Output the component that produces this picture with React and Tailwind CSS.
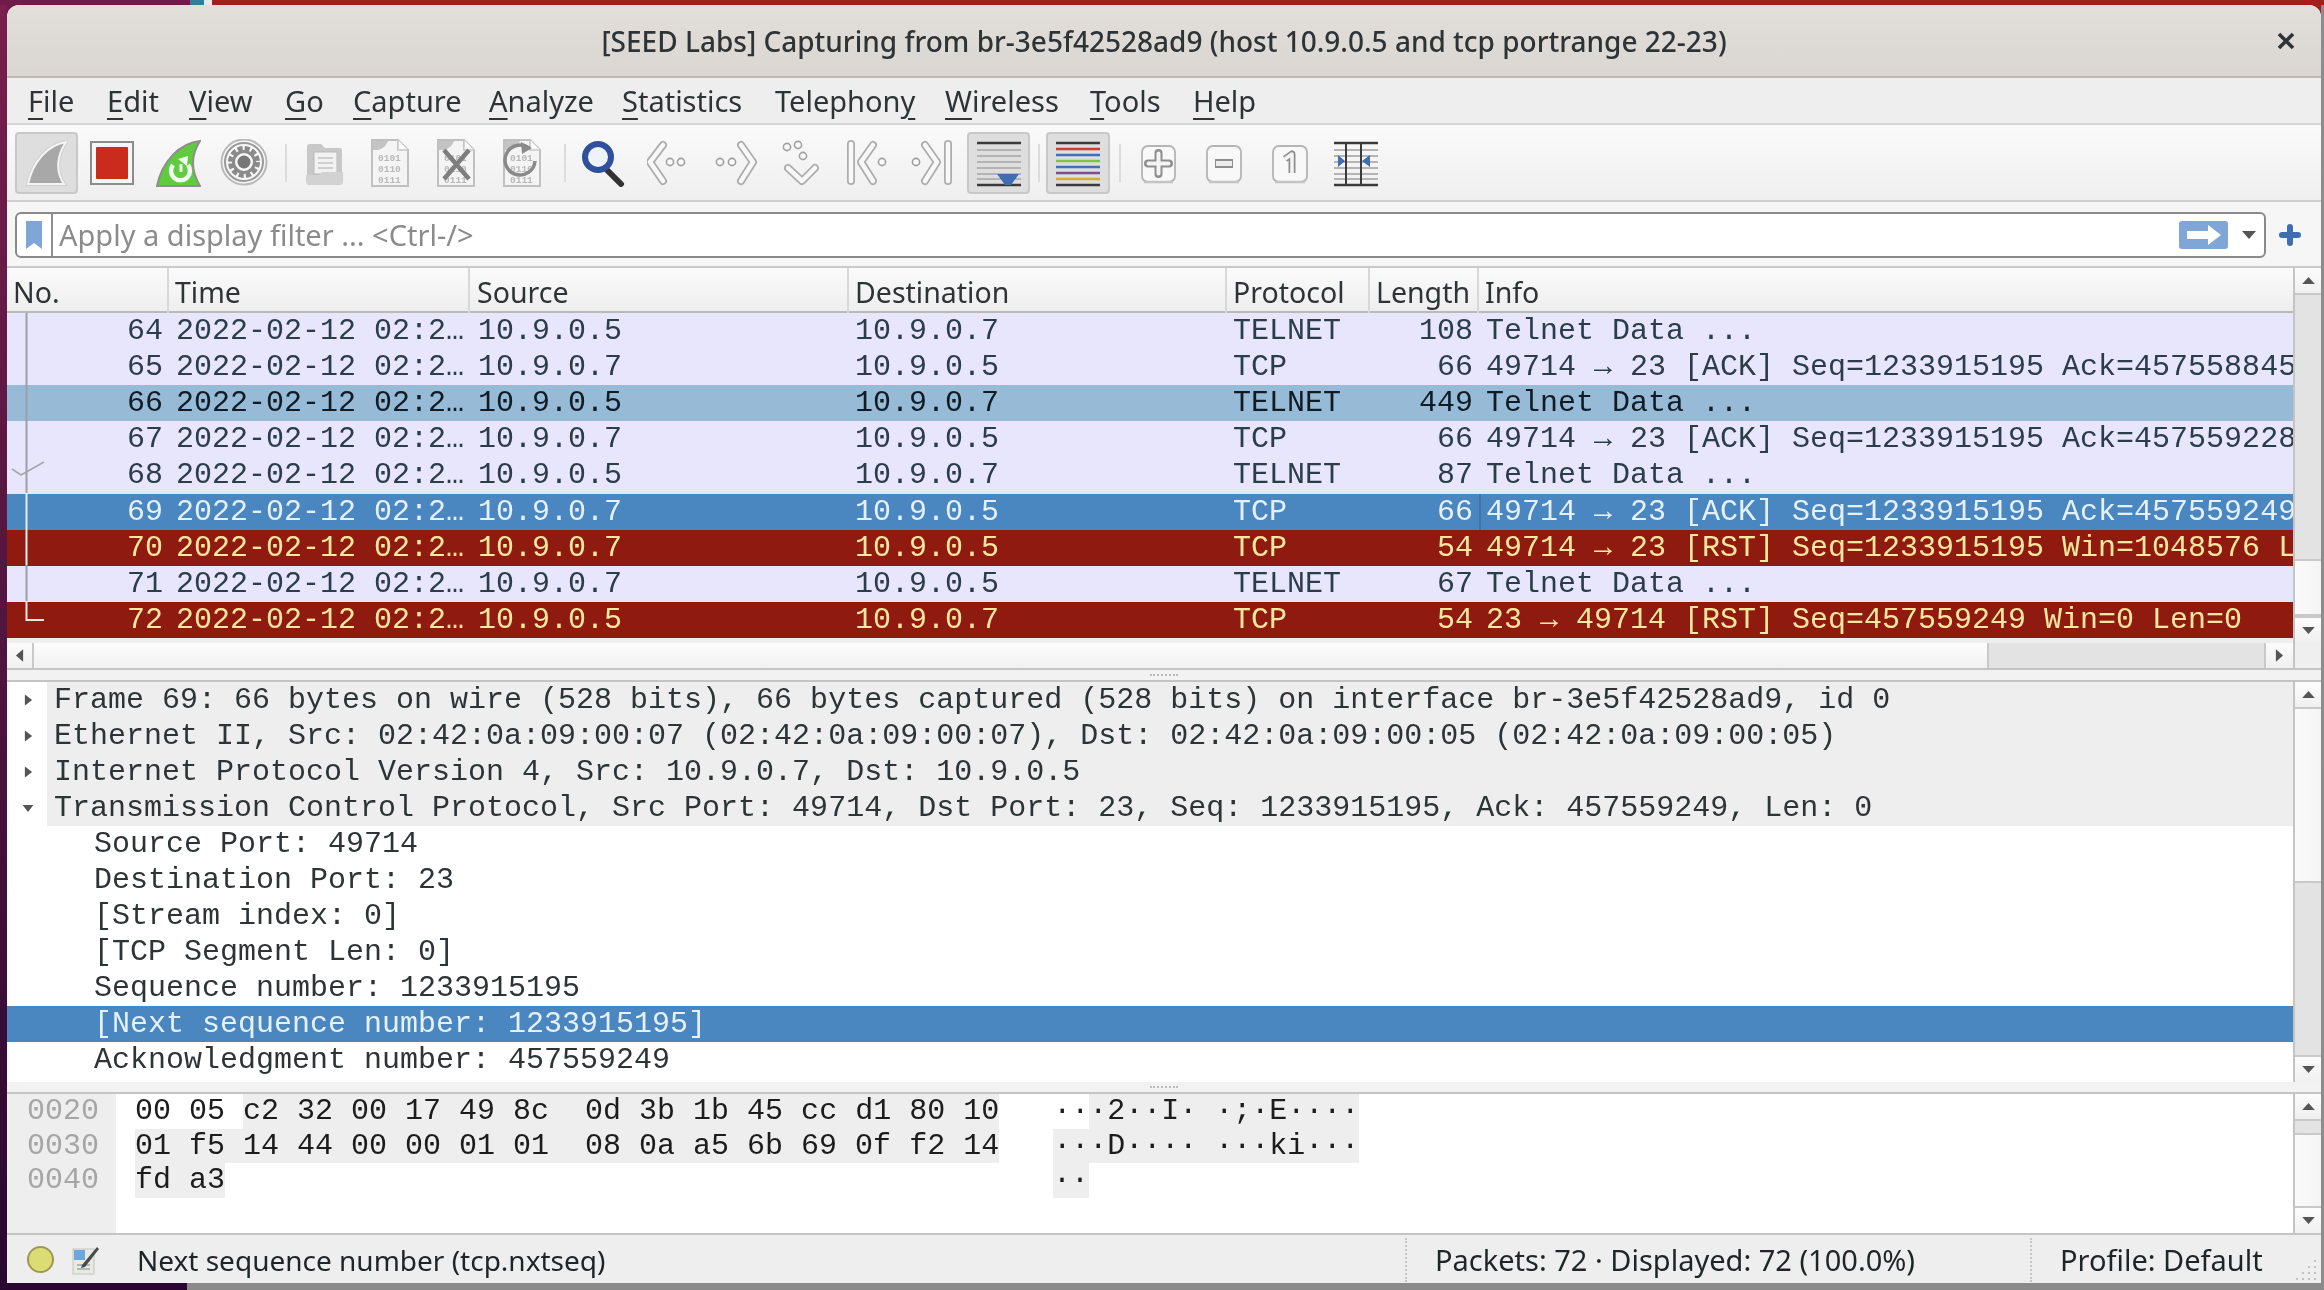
import React from "react";

const sans = "font-['Noto_Sans',sans-serif]";
const mono = "font-['Liberation_Mono',monospace]";

const menus = [
  ["", "F", "ile", "w-[79px]"],
  ["", "E", "dit", "w-[82px]"],
  ["", "V", "iew", "w-[96px]"],
  ["", "G", "o", "w-[68px]"],
  ["", "C", "apture", "w-[136px]"],
  ["", "A", "nalyze", "w-[133px]"],
  ["", "S", "tatistics", "w-[153px]"],
  ["Telephon", "y", "", "w-[170px]"],
  ["", "W", "ireless", "w-[145px]"],
  ["", "T", "ools", "w-[103px]"],
  ["", "H", "elp", "w-[80px]"],
];

const A = "10.9.0.5";
const B = "10.9.0.7";
const rows = [
  [64, A, B, "TELNET", 108, "Telnet Data ...", "n"],
  [65, B, A, "TCP", 66, "49714 → 23 [ACK] Seq=1233915195 Ack=457558845", "n"],
  [66, A, B, "TELNET", 449, "Telnet Data ...", "m"],
  [67, B, A, "TCP", 66, "49714 → 23 [ACK] Seq=1233915195 Ack=457559228", "n"],
  [68, A, B, "TELNET", 87, "Telnet Data ...", "n"],
  [69, B, A, "TCP", 66, "49714 → 23 [ACK] Seq=1233915195 Ack=457559249", "s"],
  [70, B, A, "TCP", 54, "49714 → 23 [RST] Seq=1233915195 Win=1048576 Len=0", "r"],
  [71, B, A, "TELNET", 67, "Telnet Data ...", "n"],
  [72, A, B, "TCP", 54, "23 → 49714 [RST] Seq=457559249 Win=0 Len=0", "r"],
];
const rowStyle = {
  n: "bg-[#e7e6fc] text-[#2c3d4a]",
  m: "bg-[#97bad7] text-[#0f1c26]",
  s: "bg-[#4a87c0] text-[#e6f0f8]",
  r: "bg-[#8f1b10] text-[#fbe8a0]",
};
const cols = "grid grid-cols-[162px_301px_379px_378px_143px_109px_1fr]";

const Up = () => (
  <svg viewBox="0 0 16 10" className="w-[15px] h-[9px]"><path d="M8 1 L15 9 H1Z" fill="#555" /></svg>
);
const Down = () => (
  <svg viewBox="0 0 16 10" className="w-[15px] h-[9px]"><path d="M8 9 L15 1 H1Z" fill="#555" /></svg>
);
const Left = () => (
  <svg viewBox="0 0 10 16" className="w-[9px] h-[15px]"><path d="M1 8 L9 1 V15Z" fill="#555" /></svg>
);
const Right = () => (
  <svg viewBox="0 0 10 16" className="w-[9px] h-[15px]"><path d="M9 8 L1 1 V15Z" fill="#555" /></svg>
);

const Btn = ({ className = "", children }) => (
  <div className={`flex items-center justify-center bg-gradient-to-b from-[#fcfcfc] to-[#f0f0f0] border-[#c9c9c9] ${className}`}>
    {children}
  </div>
);

const Ico = ({ w, className = "", children }) => (
  <svg viewBox={`0 0 ${w} 48`} width={w} height={48} className={`shrink-0 ${className}`} fill="none">
    {children}
  </svg>
);

const Sep = ({ className }) => <div className={`w-[2px] h-[38px] bg-[#dcdcdc] shrink-0 ${className}`} />;

const Toggle = ({ className = "", children }) => (
  <div className={`h-[62px] shrink-0 flex items-center justify-center rounded-[4px] border-2 border-[#c8c8c8] bg-[#dedede] ${className}`}>
    {children}
  </div>
);

const Doc = ({ children }) => (
  <Ico w={40} className="ml-[26px]">
    <path d="M2 1 H28 L38 11 V47 H2Z" fill="#f4f4f4" stroke="#c0c0c0" strokeWidth="2" />
    <path d="M3 2 H18 C16 7 14 9 8 11 H3Z M22 2 H27 V11 H36 L28 2Z" fill="#c4c4c4" />
    <path d="M28 1 V11 H38" fill="#fafafa" stroke="#c8c8c8" strokeWidth="1.5" />
    <g fontFamily="'Liberation Mono',monospace" fontSize="9.5" fill="#b8b8b8" fontWeight="700">
      <text x="8" y="22">0101</text>
      <text x="8" y="33">0110</text>
      <text x="8" y="44">0111</text>
    </g>
    {children}
  </Ico>
);

const Chevron = ({ d }) => (
  <>
    <path d={d} stroke="#adadad" strokeWidth="8" strokeLinecap="round" strokeLinejoin="round" />
    <path d={d} stroke="#f8f8f8" strokeWidth="4.5" strokeLinecap="round" strokeLinejoin="round" />
  </>
);
const Dot = ({ x, y }) => <circle cx={x} cy={y} r="3.6" fill="#fafafa" stroke="#a0a0a0" strokeWidth="1.6" />;

const ZoomBox = ({ w = 36, className = "ml-[30px]", children }) => (
  <Ico w={w} className={className}>
    <rect x="1" y="7" width={w - 2} height="36" rx="6" fill="#f8f8f8" stroke="#b4b4b4" strokeWidth="1.8" />
    <path d={`M3 43 H${w - 3}`} stroke="#c4c4c4" strokeWidth="2.5" />
    {children}
  </Ico>
);

function Toolbar() {
  return (
    <div className="h-[77px] shrink-0 flex items-center pl-[8px] bg-gradient-to-b from-[#fafafa] to-[#efefef] border-b-2 border-[#cfcfcf]">
      <Toggle className="w-[63px]">
        <Ico w={42}>
          <path d="M40 3 C22 6 7 22 2 45 H38 C29 32 31 16 40 3Z" fill="#a8a8a8" stroke="#cfcfcf" strokeWidth="4" />
          <path d="M40 3 C22 6 7 22 2 45 H38 C29 32 31 16 40 3Z" fill="#a8a8a8" stroke="#f4f4f4" strokeWidth="2" />
        </Ico>
      </Toggle>
      <Ico w={44} className="ml-[12px]">
        <rect x="1" y="3" width="42" height="42" fill="#f6f6f6" stroke="#8c8c8c" strokeWidth="2" />
        <rect x="6" y="8" width="32" height="32" rx="1" fill="#c92b1c" />
      </Ico>
      <Ico w={45} className="ml-[22px]">
        <path d="M44 2 C24 4 6 22 1 47 H44 C35 32 35 16 44 2Z" fill="#5fcb3f" stroke="#8e8e8e" strokeWidth="2" />
        <path d="M17 26 A9.5 9.5 0 1 0 32 26" stroke="#f2fbef" strokeWidth="4.5" />
        <path d="M22 20 L32 17 L31 27Z" fill="#f2fbef" />
        <path d="M25 25 V33" stroke="#f2fbef" strokeWidth="3" />
      </Ico>
      <Ico w={48} className="ml-[19px]">
        <circle cx="24" cy="23" r="22.5" fill="#f7f7f7" stroke="#b9b9b9" strokeWidth="2" />
        <circle cx="24" cy="23" r="19" stroke="#9a9a9a" strokeWidth="2" />
        <circle cx="24" cy="23" r="13.5" stroke="#8b8b8b" strokeWidth="5" strokeDasharray="5 2.1" />
        <circle cx="24" cy="23" r="10.5" stroke="#8b8b8b" strokeWidth="3" />
        <circle cx="24" cy="23" r="6.5" fill="#777" />
      </Ico>
      <Sep className="ml-[17px]" />
      <Ico w={39} className="ml-[18px]">
        <path d="M2 8 Q2 5 5 5 H16 L20 9 H35 Q37 9 37 12 V40 H2Z" fill="#c8c8c8" />
        <rect x="9" y="13" width="23" height="22" fill="#f2f2f2" stroke="#b9b9b9" />
        <path d="M13 19 H28 M13 24 H28 M13 29 H28" stroke="#c4c4c4" strokeWidth="1.6" />
        <path d="M1 36 H14 L17 33 H38 V42 Q38 46 35 46 H4 Q1 46 1 42Z" fill="#d2d2d2" />
      </Ico>
      <Doc />
      <Doc>
        <path d="M8 11 L33 40 M33 11 L8 40" stroke="#7e7e7e" strokeWidth="4.5" />
      </Doc>
      <Doc>
        <path d="M27 9 A15 15 0 1 0 33 22" stroke="#8a8a8a" strokeWidth="3.5" />
        <path d="M19 3 L30 9 L20 15Z" fill="#8a8a8a" />
      </Doc>
      <Sep className="ml-[22px]" />
      <Ico w={45} className="ml-[14px]">
        <path d="M27 31 L41 45" stroke="#333" strokeWidth="6" strokeLinecap="round" />
        <circle cx="18" cy="18" r="13" fill="#eef2fa" stroke="#2f4f9f" strokeWidth="6" />
      </Ico>
      <Ico w={41} className="ml-[22px]">
        <Chevron d="M16 6 L3 23 L16 42" />
        <Dot x={23} y={23} />
        <Dot x={34} y={23} />
      </Ico>
      <Ico w={43} className="ml-[26px]">
        <Dot x={6} y={23} />
        <Dot x={18} y={23} />
        <Chevron d="M27 6 L39 23 L27 42" />
      </Ico>
      <Ico w={38} className="ml-[25px]">
        <Dot x={5} y={8} />
        <Dot x={16} y={6} />
        <Dot x={21} y={17} />
        <Chevron d="M6 29 L20 42 L33 29" />
      </Ico>
      <Ico w={41} className="ml-[27px]">
        <Chevron d="M4 5 V42" />
        <Chevron d="M26 6 L14 23 L26 42" />
        <Dot x={35} y={23} />
      </Ico>
      <Ico w={42} className="ml-[22px]">
        <Dot x={6} y={23} />
        <Chevron d="M15 6 L27 23 L15 42" />
        <Chevron d="M38 5 V42" />
      </Ico>
      <Toggle className="w-[63px] ml-[15px]">
        <Ico w={46}>
          <path d="M1 4 H45 M1 46 H45" stroke="#3b3b3b" strokeWidth="2.4" />
          <path d="M1 11 H45 M1 17 H45 M1 23 H45 M1 29 H45 M1 35 H45 M1 40 H45" stroke="#b4b4b4" strokeWidth="2" />
          <path d="M21 35 H43 L35 46 H29Z" fill="#3f6eb0" />
        </Ico>
      </Toggle>
      <Sep className="ml-[8px]" />
      <Toggle className="ml-[6px] w-[64px]">
        <Ico w={46}>
          <path d="M1 4 H45 M1 46 H45" stroke="#3b3b3b" strokeWidth="2.4" />
          <path d="M1 10 H45" stroke="#cc3a33" strokeWidth="2.6" />
          <path d="M1 16 H45" stroke="#3f70b8" strokeWidth="2.6" />
          <path d="M1 22 H45" stroke="#7fc241" strokeWidth="2.6" />
          <path d="M1 28 H45" stroke="#3f70b8" strokeWidth="2.6" />
          <path d="M1 34 H45" stroke="#7a4f94" strokeWidth="2.6" />
          <path d="M1 40 H45" stroke="#d3ac33" strokeWidth="2.6" />
        </Ico>
      </Toggle>
      <Sep className="ml-[9px]" />
      <ZoomBox w={35} className="ml-[20px]">
        <path d="M17.5 14 V35 M7 24.5 H28" stroke="#8e8e8e" strokeWidth="8" strokeLinecap="round" />
        <path d="M17.5 14.5 V34.5 M7.5 24.5 H27.5" stroke="#f4f4f4" strokeWidth="4" strokeLinecap="round" />
      </ZoomBox>
      <ZoomBox>
        <path d="M9 24.5 H27" stroke="#8e8e8e" strokeWidth="9" />
        <path d="M10 24.5 H26" stroke="#ececec" strokeWidth="5" />
      </ZoomBox>
      <ZoomBox>
        <path d="M13 20 L20 15 V34" stroke="#8e8e8e" strokeWidth="7" strokeLinejoin="round" />
        <path d="M13 20 L20 15 V34" stroke="#f4f4f4" strokeWidth="3.5" strokeLinejoin="round" />
      </ZoomBox>
      <Ico w={44} className="ml-[26px]">
        <path d="M0 4 H44 M0 46 H44" stroke="#3b3b3b" strokeWidth="2.4" />
        <path d="M0 11 H44 M0 17 H44 M0 23 H44 M0 29 H44 M0 35 H44 M0 40 H44" stroke="#b4b4b4" strokeWidth="2" />
        <path d="M12 3 V47 M27 3 V47" stroke="#3b3b3b" strokeWidth="2" />
        <path d="M4 16 L11 22 L4 28Z M36 16 L28 22 L36 28Z" fill="#3f6eb0" />
      </Ico>
    </div>
  );
}

const Scrollbar = ({ top, mid, bottomTrack, h }) => (
  <div className={`w-[28px] shrink-0 flex flex-col border-l-2 border-[#c4c4c4] ${h}`}>
    <Btn className="h-[27px] shrink-0 border-b-2"><Up /></Btn>
    {top && <div className={`${top} shrink-0 bg-[#e3e3e3] border-b-2 border-[#c9c9c9]`} />}
    {mid && <div className={`${mid} shrink-0 bg-gradient-to-r from-[#fbfbfb] to-[#f4f4f4] border-b-2 border-[#c9c9c9]`} />}
    {bottomTrack && <div className="flex-1 bg-[#e3e3e3]" />}
    <Btn className="h-[27px] shrink-0 border-t-2"><Down /></Btn>
  </div>
);

const Head = ({ className, children }) => (
  <div className={`flex items-center h-full pt-[3px] border-r-2 border-[#d8d8d8] ${className}`}>{children}</div>
);

function PacketPane() {
  return (
    <div className="flex h-[375px] shrink-0">
      <div className="flex-1 min-w-0 flex flex-col">
        <div className={`${cols} h-[45px] shrink-0 bg-gradient-to-b from-[#fbfbfb] to-[#eeeeee] border-b-2 border-[#b9b9b9] text-[28.5px] text-[#2e3436] ${sans}`}>
          <Head className="pl-[6px]">No.</Head>
          <Head className="pl-[6px]">Time</Head>
          <Head className="pl-[7px]">Source</Head>
          <Head className="pl-[6px]">Destination</Head>
          <Head className="pl-[6px]">Protocol</Head>
          <Head className="pl-[6px]">Length</Head>
          <div className="flex items-center pt-[3px] pl-[6px]">Info</div>
        </div>
        <div className={`relative h-[325px] shrink-0 grid grid-rows-9 text-[30px] leading-none whitespace-pre ${mono}`}>
          {rows.map(([no, src, dst, proto, len, info, k]) => (
            <div key={no} className={`${cols} items-center ${rowStyle[k]}`}>
              <div className="text-right pr-[6px]">{no}</div>
              <div className="pl-[7px]">2022-02-12 02:2…</div>
              <div className="pl-[8px]">{src}</div>
              <div className="pl-[6px]">{dst}</div>
              <div className="pl-[6px]">{proto}</div>
              <div className="text-right pr-[6px]">{len}</div>
              <div className={`overflow-hidden h-full flex items-center ${k === "s" ? "pl-[5px] border-l-2 border-[#3f75aa]" : "pl-[7px]"}`}>{info}</div>
            </div>
          ))}
          <svg className="absolute left-0 top-0 w-[50px] h-[325px]" viewBox="0 0 50 325" fill="none">
            <path d="M19.5 0 V180" stroke="#9aa0a8" strokeWidth="2" />
            <path d="M19.5 180 V252" stroke="#e8ecf0" strokeWidth="2" />
            <path d="M19.5 252 V288" stroke="#9aa0a8" strokeWidth="2" />
            <path d="M19.5 288 V307 H37" stroke="#f0e6d8" strokeWidth="2" />
            <path d="M5 156 L14 162 L37 149" stroke="#a4a8ae" strokeWidth="1.6" />
          </svg>
        </div>
        <div className="h-[5px] shrink-0 bg-[#eeeeee]" />
      </div>
      <Scrollbar h="h-[375px]" top="h-[266px]" mid="flex-1" />
    </div>
  );
}

function HScroll() {
  return (
    <div className="flex h-[27px] shrink-0 bg-[#e3e3e3] border-b-2 border-[#c4c4c4]">
      <Btn className="w-[27px] border-r-2"><Left /></Btn>
      <div className="w-[1955px] bg-gradient-to-b from-[#fdfdfd] to-[#f1f1f1] border-r-2 border-[#c9c9c9]" />
      <div className="flex-1" />
      <Btn className="w-[29px] border-l-2"><Right /></Btn>
      <div className="w-[28px] bg-[#efefef] border-l-2 border-[#c4c4c4]" />
    </div>
  );
}

const Splitter = () => (
  <div className="h-[12px] shrink-0 bg-[#f2f2f2] border-b-2 border-[#c4c4c4] flex items-center justify-center">
    <div className="w-[28px] border-t-2 border-dotted border-[#bbbbbb]" />
  </div>
);

const details = [
  ["c", "Frame 69: 66 bytes on wire (528 bits), 66 bytes captured (528 bits) on interface br-3e5f42528ad9, id 0"],
  ["c", "Ethernet II, Src: 02:42:0a:09:00:07 (02:42:0a:09:00:07), Dst: 02:42:0a:09:00:05 (02:42:0a:09:00:05)"],
  ["c", "Internet Protocol Version 4, Src: 10.9.0.7, Dst: 10.9.0.5"],
  ["e", "Transmission Control Protocol, Src Port: 49714, Dst Port: 23, Seq: 1233915195, Ack: 457559249, Len: 0"],
  ["f", "Source Port: 49714"],
  ["f", "Destination Port: 23"],
  ["f", "[Stream index: 0]"],
  ["f", "[TCP Segment Len: 0]"],
  ["f", "Sequence number: 1233915195"],
  ["s", "[Next sequence number: 1233915195]"],
  ["f", "Acknowledgment number: 457559249"],
];

function DetailPane() {
  return (
    <div className="flex h-[400px] shrink-0 bg-white">
      <div className={`flex-1 min-w-0 overflow-hidden text-[30px] leading-none whitespace-pre text-[#2e3436] ${mono}`}>
        {details.map(([k, t]) =>
          k === "c" || k === "e" ? (
            <div key={t} className="h-[36px] flex items-center">
              <div className="w-[40px] flex justify-center shrink-0 pl-[2px]">
                {k === "c" ? (
                  <svg viewBox="0 0 10 14" className="w-[9px] h-[14px]"><path d="M1 1 L9 7 L1 13Z" fill="#555" /></svg>
                ) : (
                  <svg viewBox="0 0 14 10" className="w-[14px] h-[9px]"><path d="M1 1 H13 L7 9Z" fill="#555" /></svg>
                )}
              </div>
              <div className="flex-1 h-full bg-[#eeeeee] flex items-center pl-[7px]">{t}</div>
            </div>
          ) : (
            <div key={t} className={`h-[36px] flex items-center pl-[87px] ${k === "s" ? "bg-[#4a87c0] text-[#e6f0f8]" : ""}`}>{t}</div>
          )
        )}
      </div>
      <Scrollbar h="h-[400px]" mid="h-[174px]" bottomTrack />
    </div>
  );
}

function HexPane() {
  const g = "bg-[#eeeeee]";
  return (
    <div className="flex h-[141px] shrink-0 bg-white border-b-2 border-[#c4c4c4]">
      <div className={`flex-1 min-w-0 flex text-[30px] leading-none whitespace-pre text-[#1c1c1c] ${mono}`}>
        <div className="w-[109px] shrink-0 bg-[#eeeeee] pl-[20px] text-[#a6a6a6]">
          <div className="h-[34.5px] flex items-center">0020</div>
          <div className="h-[34.5px] flex items-center">0030</div>
          <div className="h-[34.5px] flex items-center">0040</div>
        </div>
        <div className="pl-[19px]">
          <div className="h-[34.5px] flex">
            <span className="flex items-center">{"00 05 "}</span>
            <span className={`flex items-center ${g}`}>{"c2 32 00 17 49 8c  0d 3b 1b 45 cc d1 80 10"}</span>
            <div className="w-[54px]" />
            <span className="flex items-center">{"··"}</span>
            <span className={`flex items-center ${g}`}>{"·2··I· ·;·E····"}</span>
          </div>
          <div className="h-[34.5px] flex">
            <span className={`flex items-center ${g}`}>{"01 f5 14 44 00 00 01 01  08 0a a5 6b 69 0f f2 14"}</span>
            <div className="w-[54px]" />
            <span className={`flex items-center ${g}`}>{"···D···· ···ki···"}</span>
          </div>
          <div className="h-[34.5px] flex">
            <span className={`flex items-center ${g}`}>{"fd a3"}</span>
            <div className="w-[828px]" />
            <span className={`flex items-center ${g}`}>{"··"}</span>
          </div>
        </div>
      </div>
      <div className="w-[28px] shrink-0 flex flex-col border-l-2 border-[#c4c4c4]">
        <Btn className="h-[27px] shrink-0 border-b-2"><Up /></Btn>
        <div className="h-[14px] shrink-0 bg-[#e3e3e3] border-b-2 border-[#c9c9c9]" />
        <div className="flex-1 bg-gradient-to-r from-[#fbfbfb] to-[#f4f4f4]" />
        <Btn className="h-[27px] shrink-0 border-t-2"><Down /></Btn>
      </div>
    </div>
  );
}

function StatusBar() {
  return (
    <div className={`h-[49px] shrink-0 flex items-center bg-[#eeeeee] text-[29px] text-[#1f2426] ${sans}`}>
      <div className="ml-[20px] w-[27px] h-[27px] rounded-full bg-[#dcdc74] border-2 border-[#9a9a50] shrink-0" />
      <svg viewBox="0 0 28 30" className="ml-[18px] w-[28px] h-[30px] shrink-0" fill="none">
        <rect x="1" y="4" width="21" height="25" fill="#e9e9e0" stroke="#c4c4c4" />
        <rect x="2" y="5" width="11" height="10" fill="#6aa7e0" />
        <path d="M5 20 H18 M5 24 H18" stroke="#9aa" strokeWidth="1.5" />
        <path d="M10 20 L25 2 L27 4 L13 22 L9 23Z" fill="#4a4a4a" />
      </svg>
      <div className="ml-[37px] w-[1268px] shrink-0 text-[28px]">Next sequence number (tcp.nxtseq)</div>
      <div className="h-[44px] border-l-2 border-dotted border-[#c6c6c6]" />
      <div className="ml-[28px] w-[595px] shrink-0">Packets: 72 · Displayed: 72 (100.0%)</div>
      <div className="h-[44px] border-l-2 border-dotted border-[#c6c6c6]" />
      <div className="ml-[28px] flex-1">Profile: Default</div>
      <svg viewBox="0 0 24 24" className="w-[24px] h-[24px] self-end mb-[2px] mr-[3px]">
        <g fill="#c2c2c2">
          <rect x="20" y="2" width="2" height="2" />
          <rect x="14" y="8" width="2" height="2" />
          <rect x="20" y="8" width="2" height="2" />
          <rect x="8" y="14" width="2" height="2" />
          <rect x="14" y="14" width="2" height="2" />
          <rect x="20" y="14" width="2" height="2" />
          <rect x="2" y="20" width="2" height="2" />
          <rect x="8" y="20" width="2" height="2" />
          <rect x="14" y="20" width="2" height="2" />
          <rect x="20" y="20" width="2" height="2" />
        </g>
      </svg>
    </div>
  );
}

export default function App() {
  return (
    <div className="w-[2324px] h-[1290px] flex flex-col overflow-hidden bg-[linear-gradient(90deg,#6f1c4c_50%,#a1201a_50%)] [filter:blur(0.5px)]">
      <div className="h-[5px] shrink-0 flex">
        <div className="w-[190px] bg-[#6f1c4c]" />
        <div className="w-[14px] bg-[#2f7f9a]" />
        <div className="w-[8px] bg-[#e8e8e8]" />
        <div className="flex-1 bg-[#a1201a]" />
      </div>
      <div className="flex-1 min-h-0 flex">
        <div className="w-[7px] shrink-0 bg-gradient-to-b from-[#7a1f4c] to-[#2a0732]" />
        <div className="flex-1 min-w-0 flex flex-col bg-[#f6f6f6] rounded-t-[12px] overflow-hidden">
          <div className={`h-[73px] shrink-0 relative flex items-center justify-center bg-gradient-to-b from-[#e2dfdb] to-[#dad6d1] border-b-2 border-[#bdb8b2] text-[28px] font-medium text-[#2e3436] ${sans}`}>
            [SEED Labs] Capturing from br-3e5f42528ad9 (host 10.9.0.5 and tcp portrange 22-23)
            <svg viewBox="0 0 18 18" className="absolute right-[26px] top-[27px] w-[18px] h-[18px]">
              <path d="M2 2 L16 16 M16 2 L2 16" stroke="#2e3436" strokeWidth="3.6" />
            </svg>
          </div>
          <div className={`h-[47px] shrink-0 flex items-center pl-[21px] bg-[#eeeeee] border-b-2 border-[#d6d6d6] text-[29px] text-[#2e3436] ${sans}`}>
            {menus.map(([a, u, b, w]) => (
              <div key={u} className={`${w} shrink-0`}>
                {a}
                <span className="underline decoration-2 underline-offset-[6px]">{u}</span>
                {b}
              </div>
            ))}
          </div>
          <Toolbar />
          <div className="h-[66px] shrink-0 flex items-center pl-[8px] pt-[2px] bg-[#f6f6f6] border-b-2 border-[#c9c9c9]">
            <div className={`w-[2251px] h-[46px] shrink-0 flex items-center rounded-[6px] border-2 border-[#8a8a8a] bg-white text-[29px] text-[#8b8b8b] ${sans}`}>
              <div className="w-[36px] h-full shrink-0 flex items-center justify-center border-r-2 border-[#8f8f8f]">
                <svg viewBox="0 0 16 28" className="w-[16px] h-[28px]"><path d="M0 0 H16 V28 L8 22 L0 28Z" fill="#7fa6d6" /></svg>
              </div>
              <div className="pl-[6px] flex-1">Apply a display filter ... &lt;Ctrl-/&gt;</div>
              <div className="w-[49px] h-[28px] rounded-[3px] bg-[#7fa6d6] flex items-center justify-center">
                <svg viewBox="0 0 34 20" className="w-[34px] h-[20px]"><path d="M0 6 H21 V0 L34 10 L21 20 V14 H0Z" fill="#fff" /></svg>
              </div>
              <div className="w-[36px] flex justify-center pl-[6px]">
                <svg viewBox="0 0 14 8" className="w-[14px] h-[8px]"><path d="M0 0 H14 L7 8Z" fill="#555" /></svg>
              </div>
            </div>
            <svg viewBox="0 0 22 22" className="ml-[13px] w-[22px] h-[22px]" fill="none">
              <path d="M11 3 V19 M3 11 H19" stroke="#3f6eb0" strokeWidth="6" strokeLinecap="round" />
            </svg>
          </div>
          <PacketPane />
          <HScroll />
          <Splitter />
          <DetailPane />
          <Splitter />
          <HexPane />
          <StatusBar />
        </div>
        <div className="w-[3px] shrink-0 bg-[#8c8c8c]" />
      </div>
      <div className="h-[7px] shrink-0 flex">
        <div className="w-[187px] bg-[#2a0732]" />
        <div className="flex-1 bg-[#8a8a8a]" />
      </div>
    </div>
  );
}
